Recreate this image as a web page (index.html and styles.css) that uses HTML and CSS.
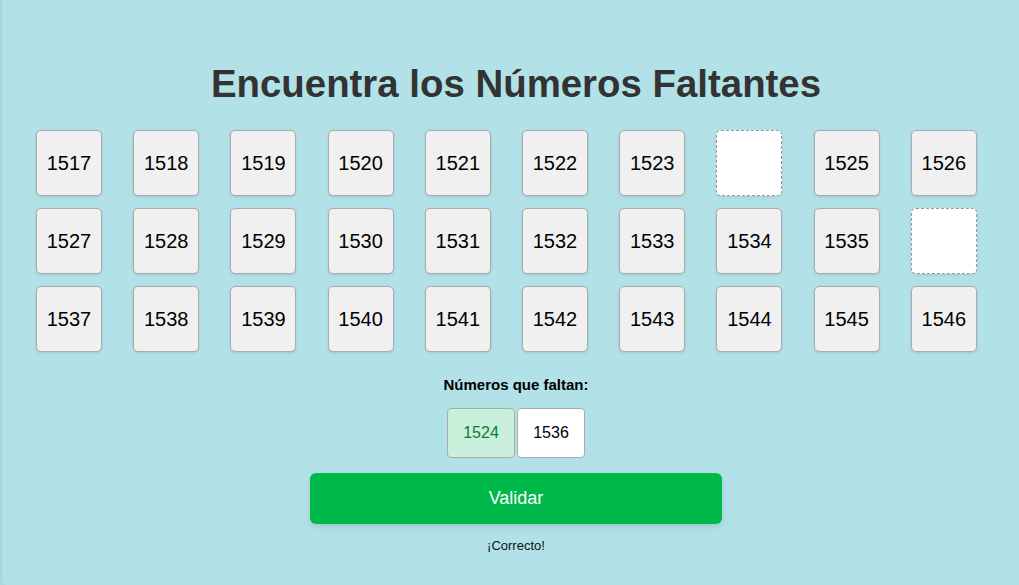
FILE: index.html
```html
<!DOCTYPE html>
<html lang="es">
<head>
<meta charset="utf-8">
<title>Encuentra los Números Faltantes</title>
<link rel="stylesheet" href="styles.css">
</head>
<body>
<div class="container">
  <h1 class="title">Encuentra los Números Faltantes</h1>
  <div class="grid">
    <div class="cell">1517</div><div class="cell">1518</div><div class="cell">1519</div><div class="cell">1520</div><div class="cell">1521</div>
    <div class="cell">1522</div><div class="cell">1523</div><div class="cell empty"></div><div class="cell">1525</div><div class="cell">1526</div>
    <div class="cell">1527</div><div class="cell">1528</div><div class="cell">1529</div><div class="cell">1530</div><div class="cell">1531</div>
    <div class="cell">1532</div><div class="cell">1533</div><div class="cell">1534</div><div class="cell">1535</div><div class="cell empty"></div>
    <div class="cell">1537</div><div class="cell">1538</div><div class="cell">1539</div><div class="cell">1540</div><div class="cell">1541</div>
    <div class="cell">1542</div><div class="cell">1543</div><div class="cell">1544</div><div class="cell">1545</div><div class="cell">1546</div>
  </div>
  <p class="label">Números que faltan:</p>
  <div class="missing">
    <div class="chip correct">1524</div>
    <div class="chip">1536</div>
  </div>
  <button class="validate">Validar</button>
  <p class="result">¡Correcto!</p>
</div>
</body>
</html>
```

FILE: styles.css
```css
html, body {
  margin: 0;
  padding: 0;
  background: #b0e0e6;
  overflow: hidden;
  font-family: "Liberation Sans", Arial, sans-serif;
}
.container {
  box-sizing: border-box;
  width: 1028px;
  height: 600px;
  margin: -12px 0 0 2px;
  padding: 12px 34px 0 34px;
  background: #b2e2e8;
  border-radius: 10px;
  box-shadow: 0 0 8px rgba(0, 0, 0, 0.12);
  display: flex;
  flex-direction: column;
  align-items: center;
}
.title {
  margin: 61px 0 0 0;
  font-size: 38.4px;
  line-height: 46px;
  font-weight: bold;
  color: #333;
}
.grid {
  margin-top: 23px;
  width: 960px;
  display: grid;
  grid-template-columns: repeat(10, 1fr);
  gap: 12px;
}
.cell {
  box-sizing: border-box;
  width: 66px;
  height: 66px;
  background: #f0f0f0;
  border: 1px solid #aaa;
  border-radius: 5px;
  box-shadow: 0 1px 3px rgba(0, 0, 0, 0.12);
  display: flex;
  align-items: center;
  justify-content: center;
  font-size: 20px;
  color: #000;
}
.cell.empty {
  background: #fff;
  border: 1px dashed #999;
}
.label {
  margin: 24px 0 0 0;
  font-size: 15px;
  line-height: 18px;
  font-weight: bold;
  color: #000;
}
.missing {
  margin-top: 14px;
  display: flex;
  gap: 2px;
}
.chip {
  box-sizing: border-box;
  width: 68px;
  height: 50px;
  background: #fff;
  border: 1px solid #aaa;
  border-radius: 4px;
  display: flex;
  align-items: center;
  justify-content: center;
  font-size: 16px;
  color: #000;
}
.chip.correct {
  background: #c8f0da;
  color: #0a7a3a;
}
.validate {
  margin-top: 15px;
  width: 412px;
  height: 51px;
  border: none;
  border-radius: 6px;
  background: #00b94b;
  color: #fff;
  font-family: "Liberation Sans", Arial, sans-serif;
  font-size: 18px;
  box-shadow: 0 3px 6px rgba(0, 0, 0, 0.12);
  cursor: pointer;
}
.result {
  margin: 14px 0 0 0;
  font-size: 13px;
  line-height: 16px;
  color: #111;
}
```
